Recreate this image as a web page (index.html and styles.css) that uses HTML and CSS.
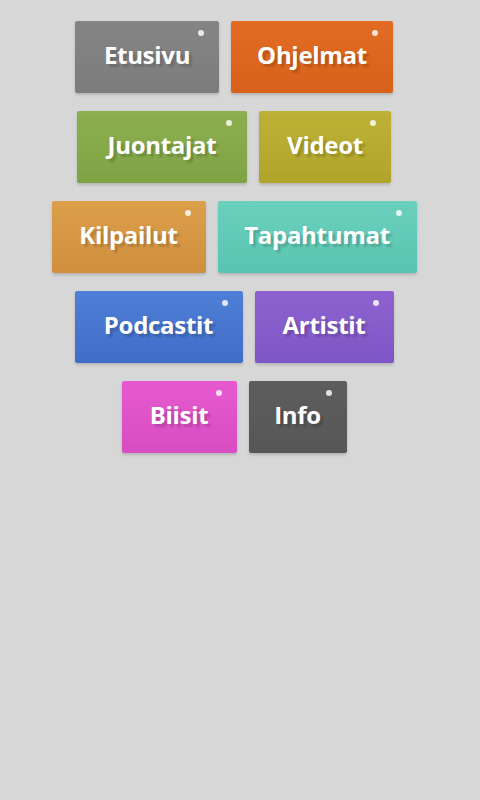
FILE: index.html
```html
<!DOCTYPE html>
<html>
<head>
    <title>Valikko</title>
    <link rel="stylesheet" href="styles.css">
</head>
<body>
    <div class="menu">
        <div class="row">
            <a class="tile gray" href="#">Etusivu</a>
            <a class="tile orange" href="#">Ohjelmat</a>
        </div>
        <div class="row">
            <a class="tile green" href="#">Juontajat</a>
            <a class="tile olive" href="#">Videot</a>
        </div>
        <div class="row">
            <a class="tile amber" href="#">Kilpailut</a>
            <a class="tile teal" href="#">Tapahtumat</a>
        </div>
        <div class="row">
            <a class="tile blue" href="#">Podcastit</a>
            <a class="tile purple" href="#">Artistit</a>
        </div>
        <div class="row">
            <a class="tile pink" href="#">Biisit</a>
            <a class="tile dark" href="#">Info</a>
        </div>
    </div>
</body>
</html>
```

FILE: styles.css
```css
html, body {
    margin: 0;
    padding: 0;
    height: 100%;
}

body {
    background: #d7d7d7;
    font-family: "Open Sans", "Noto Sans", sans-serif;
}

.menu {
    padding-top: 21px;
}

.row {
    display: flex;
    justify-content: center;
    margin-bottom: 18px;
}

.tile {
    position: relative;
    display: block;
    box-sizing: border-box;
    height: 72px;
    line-height: 68px;
    padding-bottom: 4px;
    margin-right: 12px;
    border-radius: 2px;
    color: #fff;
    font-size: 24px;
    font-weight: bold;
    letter-spacing: -0.3px;
    text-align: center;
    text-decoration: none;
    text-shadow: 3px 3px 2px rgba(0, 0, 0, 0.16);
    box-shadow: 0 2px 3px rgba(0, 0, 0, 0.16);
}

/* faint dotted lines near the top and bottom */
.tile::before {
    content: "";
    position: absolute;
    left: 0;
    right: 0;
    top: 7px;
    bottom: 7px;
    border-top: 1px dotted rgba(0, 0, 0, 0.04);
    border-bottom: 1px dotted rgba(0, 0, 0, 0.04);
}

/* little white dot in the corner */
.tile::after {
    content: "";
    position: absolute;
    top: 9px;
    right: 15px;
    width: 6px;
    height: 6px;
    border-radius: 50%;
    background: rgba(255, 255, 255, 0.82);
}

.gray   { width: 144px; background: linear-gradient(#858585, #7c7c7c); }
.orange { width: 162px; background: linear-gradient(#e26c24, #d8611b); }
.green  { width: 170px; background: linear-gradient(#8cae4f, #7fa445); }
.olive  { width: 132px; background: linear-gradient(#bdb136, #b0a42a); }
.amber  { width: 154px; background: linear-gradient(#dc9f4a, #d0903e); }
.teal   { width: 199px; background: linear-gradient(#6bd0bd, #59c5b0); }
.blue   { width: 168px; background: linear-gradient(#4f7fd6, #416dc8); }
.purple { width: 139px; background: linear-gradient(#8e62d0, #7f56c6); }
.pink   { width: 115px; background: linear-gradient(#e659d0, #d84dc2); }
.dark   { width: 98px;  background: linear-gradient(#5c5d5c, #565756); }
```
